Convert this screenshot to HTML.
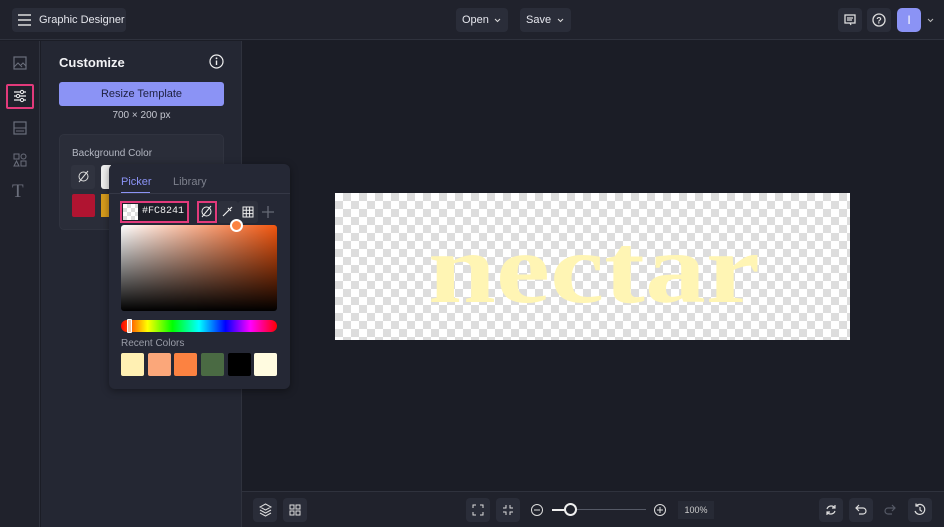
<!DOCTYPE html>
<html><head><style>
*{box-sizing:border-box;margin:0;padding:0}
body{width:944px;height:527px;background:#1b1d26;font-family:"Liberation Sans",sans-serif;color:#e6e7ee;position:relative;overflow:hidden}
.a{position:absolute}
.btn{position:absolute;background:#2a2d39;border-radius:4px}
.chk{background-color:#fff;background-image:linear-gradient(45deg,#ddd 25%,transparent 25%,transparent 75%,#ddd 75%),linear-gradient(45deg,#ddd 25%,transparent 25%,transparent 75%,#ddd 75%);background-size:16px 16px;background-position:0 0,8px 8px}
svg{position:absolute}
</style></head><body>
<div class="a" style="left:0;top:0;width:944px;height:40px;background:#20222c;border-bottom:1px solid #2f323d"></div>
<div class="btn" style="left:12px;top:8px;width:114px;height:24px"></div>
<svg style="left:18px;top:14px" width="13" height="12"><path d="M0 1H13M0 6H13M0 11H13" stroke="#ddd" stroke-width="1.4"/></svg>
<div class="a" style="left:39px;top:14px;font-size:11px;color:#e5e6ec">Graphic Designer</div>
<div class="btn" style="left:456px;top:8px;width:52px;height:24px"></div>
<div class="a" style="left:462px;top:14px;font-size:11px">Open</div>
<svg style="left:494px;top:18px" width="7" height="5"><path d="M1 1L3.5 3.5L6 1" stroke="#ddd" fill="none"/></svg>
<div class="btn" style="left:520px;top:8px;width:51px;height:24px"></div>
<div class="a" style="left:526px;top:14px;font-size:11px">Save</div>
<svg style="left:557px;top:18px" width="7" height="5"><path d="M1 1L3.5 3.5L6 1" stroke="#ddd" fill="none"/></svg>
<div class="btn" style="left:838px;top:8px;width:24px;height:24px"></div>
<svg style="left:844px;top:14px" width="12" height="12"><rect x="1" y="1" width="10" height="8" fill="none" stroke="#ddd" stroke-width="1.3"/><path d="M3 4H9M3 6H8M6 9L7 11" stroke="#ddd" stroke-width="1.2"/></svg>
<div class="btn" style="left:867px;top:8px;width:24px;height:24px"></div>
<svg style="left:872px;top:13px" width="14" height="14"><circle cx="7" cy="7" r="6" fill="none" stroke="#ddd" stroke-width="1.3"/><text x="7" y="10.5" font-size="9" font-family="Liberation Sans" fill="#ddd" text-anchor="middle" font-weight="bold">?</text></svg>
<div class="a" style="left:897px;top:8px;width:24px;height:24px;background:#8b93f5;border-radius:5px;color:#fff;font-size:12px;text-align:center;line-height:24px">I</div>
<svg style="left:927px;top:18px" width="7" height="5"><path d="M1 1L3.5 3.5L6 1" stroke="#bbb" fill="none"/></svg>
<div class="a" style="left:0;top:41px;width:40px;height:486px;background:#20222c;border-right:1px solid #2f323d"></div>
<svg style="left:13px;top:56px" width="14" height="14"><rect x="1" y="1" width="12" height="12" fill="none" stroke="#6b6f7c" stroke-width="1.2"/><path d="M1 11L5 7L9 11M8 9L10 7L13 10" stroke="#6b6f7c" fill="none"/></svg>
<div class="a" style="left:6px;top:84px;width:28px;height:25px;border:2px solid #e23a7b;border-radius:2px"></div>
<svg style="left:13px;top:89px" width="14" height="14"><path d="M1 3H13M1 7H13M1 11H13" stroke="#eee" stroke-width="1.2"/><circle cx="9" cy="3" r="1.6" fill="#20222c" stroke="#eee"/><circle cx="5" cy="7" r="1.6" fill="#20222c" stroke="#eee"/><circle cx="9" cy="11" r="1.6" fill="#20222c" stroke="#eee"/></svg>
<svg style="left:13px;top:121px" width="14" height="14"><rect x="1" y="1" width="12" height="12" fill="none" stroke="#6b6f7c" stroke-width="1.2"/><path d="M1 7H13M3 10H11" stroke="#6b6f7c"/></svg>
<svg style="left:13px;top:153px" width="14" height="14" fill="none" stroke="#6b6f7c"><rect x="1" y="1" width="5" height="5"/><circle cx="10.5" cy="3.5" r="2.5"/><path d="M3.5 8L6 13H1Z"/><rect x="8" y="8" width="5" height="5"/></svg>
<div class="a" style="left:12px;top:181px;font-size:19px;color:#6b6f7c;font-family:'Liberation Serif'">T</div>
<div class="a" style="left:41px;top:41px;width:201px;height:486px;background:#242733;border-right:1px solid #2f323d"></div>
<div class="a" style="left:59px;top:55px;font-size:13px;font-weight:bold;color:#f2f2f5">Customize</div>
<svg style="left:209px;top:54px" width="15" height="15"><circle cx="7.5" cy="7.5" r="6.5" fill="none" stroke="#eee" stroke-width="1.2"/><path d="M7.5 6.5V11" stroke="#eee" stroke-width="1.4"/><circle cx="7.5" cy="4.3" r="0.9" fill="#eee"/></svg>
<div class="a" style="left:59px;top:82px;width:165px;height:24px;background:#8b93f5;border-radius:3px;color:#1d2040;font-size:11px;text-align:center;line-height:24px">Resize Template</div>
<div class="a" style="left:59px;top:110px;width:165px;text-align:center;font-size:10px;color:#c5c7d0">700 × 200 px</div>
<div class="a" style="left:59px;top:134px;width:165px;height:96px;background:#2a2d39;border-radius:5px;border:1px solid #30333f"></div>
<div class="a" style="left:72px;top:148px;font-size:10px;color:#b5b8c3">Background Color</div>
<div class="a" style="left:71px;top:165px;width:24px;height:24px;background:#30333f;border-radius:3px"></div>
<svg style="left:77px;top:170px" width="13" height="13" fill="none" stroke="#ddd"><circle cx="6.5" cy="6.5" r="4.5"/><path d="M2 12L11 1"/></svg>
<div class="a" style="left:101px;top:165px;width:10px;height:24px;background:#eee;border-radius:3px 0 0 3px"></div>
<div class="a" style="left:72px;top:194px;width:23px;height:23px;background:#b01431;border-radius:2px"></div>
<div class="a" style="left:101px;top:194px;width:10px;height:23px;background:#d69b1c"></div>
<div class="a" style="left:109px;top:164px;width:181px;height:225px;background:#252835;border-radius:6px;box-shadow:0 2px 8px rgba(0,0,0,.4)"></div>
<div class="a" style="left:121px;top:176px;font-size:11px;color:#8b93f5">Picker</div>
<div class="a" style="left:121px;top:192px;width:29px;height:2px;background:#8b93f5"></div>
<div class="a" style="left:173px;top:176px;font-size:11px;color:#7d808c">Library</div>
<div class="a" style="left:109px;top:193px;width:181px;height:1px;background:#353846"></div>
<div class="a" style="left:120px;top:201px;width:69px;height:22px;border:2px solid #e23a7b;background:#1d1f28"></div>
<div class="a chk" style="left:123px;top:204px;width:15px;height:16px;background-size:8px 8px;background-position:0 0,4px 4px"></div>
<div class="a" style="left:142px;top:206px;font-size:10px;font-family:'Liberation Mono';color:#eee">#FC8241</div>
<div class="a" style="left:197px;top:201px;width:20px;height:22px;border:2px solid #e23a7b"></div>
<svg style="left:200px;top:205px" width="13" height="13" fill="none" stroke="#eee"><circle cx="6.5" cy="6.5" r="4.5"/><path d="M2 12L11 1"/></svg>
<div class="a" style="left:218px;top:201px;width:20px;height:22px;background:#2d303c;border-radius:3px"></div>
<svg style="left:221px;top:205px" width="13" height="13" fill="none" stroke="#eee" stroke-width="1.2"><path d="M2 11L8 5M7 3L10 6M9 4L11 2"/></svg>
<div class="a" style="left:238px;top:201px;width:20px;height:22px;background:#2d303c;border-radius:3px"></div>
<svg style="left:242px;top:206px" width="12" height="12" fill="none" stroke="#eee"><rect x="1" y="1" width="10" height="10"/><path d="M4.3 1V11M7.6 1V11M1 4.3H11M1 7.6H11"/></svg>
<svg style="left:262px;top:206px" width="12" height="12"><path d="M6 0V12M0 6H12" stroke="#666a76" stroke-width="1.3"/></svg>
<div class="a" style="left:121px;top:225px;width:156px;height:86px;border-radius:3px;background:linear-gradient(to bottom,rgba(0,0,0,0),#000),linear-gradient(to right,#fff,#f2560f)"></div>
<div class="a" style="left:230px;top:219px;width:13px;height:13px;border-radius:50%;background:#fc8241;border:2px solid #fff"></div>
<div class="a" style="left:121px;top:320px;width:156px;height:12px;border-radius:6px;background:linear-gradient(to right,#f00,#ff0 17%,#0f0 33%,#0ff 50%,#00f 67%,#f0f 83%,#f00)"></div>
<div class="a" style="left:127px;top:319px;width:5px;height:14px;background:#f4c0a0;border:1px solid #fff;border-radius:1px"></div>
<div class="a" style="left:121px;top:338px;font-size:10px;color:#9a9da8">Recent Colors</div>
<div class="a" style="left:121px;top:353px;width:23px;height:23px;background:#fff0b3;border-radius:2px"></div>
<div class="a" style="left:148px;top:353px;width:23px;height:23px;background:#fba77a;border-radius:2px"></div>
<div class="a" style="left:174px;top:353px;width:23px;height:23px;background:#fc8241;border-radius:2px"></div>
<div class="a" style="left:201px;top:353px;width:23px;height:23px;background:#4a6a43;border-radius:2px"></div>
<div class="a" style="left:228px;top:353px;width:23px;height:23px;background:#000;border-radius:2px"></div>
<div class="a" style="left:254px;top:353px;width:23px;height:23px;background:#fffbe0;border-radius:2px"></div>
<div class="a chk" style="left:335px;top:193px;width:515px;height:147px"></div>
<svg style="left:335px;top:193px" width="515" height="147"><text x="93" y="109" font-family="Liberation Serif" font-weight="bold" font-size="100" fill="#fff5b4" textLength="332" lengthAdjust="spacingAndGlyphs">nectar</text></svg>
<div class="a" style="left:242px;top:491px;width:702px;height:36px;background:#20222c;border-top:1px solid #2f323d"></div>
<div class="btn" style="left:253px;top:498px;width:24px;height:24px"></div>
<svg style="left:259px;top:503px" width="13" height="14" fill="none" stroke="#ddd"><path d="M6.5 1L12 4L6.5 7L1 4Z M1 7L6.5 10L12 7M1 10L6.5 13L12 10"/></svg>
<div class="btn" style="left:283px;top:498px;width:24px;height:24px"></div>
<svg style="left:289px;top:504px" width="12" height="12" fill="none" stroke="#ddd"><rect x="1" y="1" width="4" height="4"/><rect x="7" y="1" width="4" height="4"/><rect x="1" y="7" width="4" height="4"/><rect x="7" y="7" width="4" height="4"/></svg>
<div class="btn" style="left:466px;top:498px;width:24px;height:24px"></div>
<svg style="left:472px;top:504px" width="12" height="12" fill="none" stroke="#ddd"><path d="M1 4V1H4M8 1H11V4M11 8V11H8M4 11H1V8"/></svg>
<div class="btn" style="left:496px;top:498px;width:24px;height:24px"></div>
<svg style="left:502px;top:504px" width="12" height="12" fill="none" stroke="#ddd"><path d="M1 4H4V1M8 1V4H11M11 8H8V11M4 11V8H1"/></svg>
<svg style="left:530px;top:503px" width="14" height="14" fill="none" stroke="#ddd"><circle cx="7" cy="7" r="5.5"/><path d="M4 7H10"/></svg>
<div class="a" style="left:552px;top:509px;width:20px;height:2px;background:#eee"></div>
<div class="a" style="left:572px;top:509px;width:74px;height:1px;background:#555966"></div>
<div class="a" style="left:564px;top:503px;width:13px;height:13px;border-radius:50%;border:2px solid #eee;background:#20222c"></div>
<svg style="left:653px;top:503px" width="14" height="14" fill="none" stroke="#ddd"><circle cx="7" cy="7" r="5.5"/><path d="M4 7H10M7 4V10"/></svg>
<div class="a" style="left:678px;top:501px;width:36px;height:18px;background:#272a35;font-size:9px;color:#ccc;text-align:center;line-height:18px">100%</div>
<div class="btn" style="left:819px;top:498px;width:24px;height:24px"></div>
<svg style="left:825px;top:504px" width="12" height="12" fill="none" stroke="#ddd" stroke-width="1.2"><path d="M10 4A4.5 4.5 0 0 0 2 5M2 8A4.5 4.5 0 0 0 10 7M10 1V4H7M2 11V8H5"/></svg>
<div class="btn" style="left:849px;top:498px;width:24px;height:24px"></div>
<svg style="left:855px;top:504px" width="12" height="12" fill="none" stroke="#ddd" stroke-width="1.2"><path d="M4 1L1 4L4 7M1 4H8A3 3 0 0 1 8 10H4"/></svg>
<svg style="left:884px;top:504px" width="12" height="12" fill="none" stroke="#555966" stroke-width="1.2"><path d="M8 1L11 4L8 7M11 4H4A3 3 0 0 0 4 10H8"/></svg>
<div class="btn" style="left:908px;top:498px;width:24px;height:24px"></div>
<svg style="left:913px;top:503px" width="14" height="14" fill="none" stroke="#ddd" stroke-width="1.2"><path d="M3 3A5 5 0 1 1 2 8M3 0.5V3H5.5M7 4V7L9 8.5"/></svg>
</body></html>
